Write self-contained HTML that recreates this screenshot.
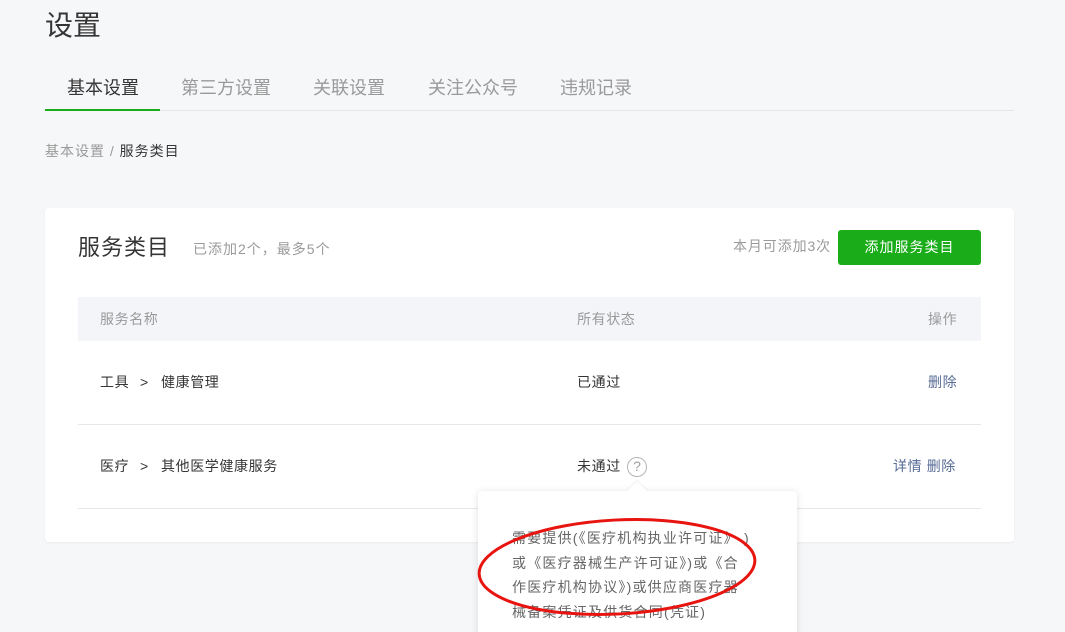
<!DOCTYPE html>
<html><head><meta charset="utf-8"><style>
*{margin:0;padding:0;box-sizing:border-box}
html,body{width:1065px;height:632px;overflow:hidden}
body{background:#f6f7f9;font-family:"Liberation Sans","Noto Sans CJK SC",sans-serif;color:#353535;position:relative}
.abs{position:absolute;white-space:nowrap}
.t{font-size:14px;line-height:18px;letter-spacing:0.6px}
.tab{position:absolute;top:76px;font-size:18px;color:#9a9a9a;line-height:24px}
</style></head><body>
<div class="abs" style="left:45px;top:8px;font-size:28px;line-height:36px;color:#353535">设置</div>
<div class="tab" style="left:67px;color:#353535">基本设置</div>
<div class="tab" style="left:181px">第三方设置</div>
<div class="tab" style="left:313px">关联设置</div>
<div class="tab" style="left:428px">关注公众号</div>
<div class="tab" style="left:560px">违规记录</div>
<div class="abs" style="left:45px;top:110px;width:969px;height:1px;background:#e4e6eb"></div>
<div class="abs" style="left:45px;top:109px;width:115px;height:2px;background:#1aad19"></div>
<div class="abs t" style="left:45px;top:142px;color:#9a9a9a;letter-spacing:1px">基本设置 / <span style="color:#353535">服务类目</span></div>

<div class="abs" style="left:45px;top:208px;width:969px;height:334px;background:#fff;border-radius:4px;box-shadow:0 1px 2px rgba(0,0,0,.05)"></div>
<div class="abs" style="left:78px;top:234px;font-size:22px;line-height:28px;color:#353535;letter-spacing:1px">服务类目</div>
<div class="abs t" style="left:193px;top:240px;color:#9a9a9a;letter-spacing:1px">已添加2个，最多5个</div>
<div class="abs t" style="left:733px;top:237px;color:#9a9a9a;letter-spacing:0.9px">本月可添加3次</div>
<div class="abs" style="left:838px;top:230px;width:143px;height:35px;background:#1aad19;border-radius:3px;color:#fff;font-size:14px;line-height:35px;text-align:center;letter-spacing:1px">添加服务类目</div>

<div class="abs" style="left:78px;top:297px;width:903px;height:44px;background:#f4f5f9"></div>
<div class="abs t" style="left:100px;top:310px;color:#9a9a9a">服务名称</div>
<div class="abs t" style="left:577px;top:310px;color:#9a9a9a">所有状态</div>
<div class="abs t" style="left:928px;top:310px;color:#9a9a9a">操作</div>

<div class="abs t" style="left:100px;top:373px">工具</div>
<div class="abs t" style="left:140px;top:373px">&gt;</div>
<div class="abs t" style="left:161px;top:373px">健康管理</div>
<div class="abs t" style="left:577px;top:373px">已通过</div>
<div class="abs t" style="left:928px;top:373px;color:#576b95">删除</div>
<div class="abs" style="left:78px;top:424px;width:903px;height:1px;background:#e7e7eb"></div>

<div class="abs t" style="left:100px;top:457px">医疗</div>
<div class="abs t" style="left:140px;top:457px">&gt;</div>
<div class="abs t" style="left:161px;top:457px">其他医学健康服务</div>
<div class="abs t" style="left:577px;top:457px">未通过</div>
<div class="abs" style="left:627px;top:457px;width:20px;height:20px;border:1.5px solid #b5b5b5;border-radius:50%;color:#a0a0a0;font-size:14px;line-height:17px;text-align:center">?</div>
<div class="abs t" style="left:893px;top:457px;color:#576b95">详情 删除</div>
<div class="abs" style="left:78px;top:508px;width:903px;height:1px;background:#e7e7eb"></div>

<div class="abs" style="left:478px;top:491px;width:319px;height:150px;background:#fff;border-radius:4px;box-shadow:0 1px 8px rgba(0,0,0,.12)"></div>
<div class="abs" style="left:630px;top:484px;width:14px;height:14px;background:#fff;transform:rotate(45deg);box-shadow:-1px -1px 2px rgba(0,0,0,.06)"></div>
<div class="abs" style="left:512px;top:526px;font-size:14px;line-height:24.5px;color:#666;letter-spacing:1.2px">需要提供(《医疗机构执业许可证》 )<br>或《医疗器械生产许可证》)或《合<br>作医疗机构协议》)或供应商医疗器<br>械备案凭证及供货合同(凭证)</div>
<svg class="abs" style="left:0;top:0" width="1065" height="632"><ellipse cx="617" cy="567" rx="138" ry="47" transform="rotate(-3 617 567)" fill="none" stroke="#e8140f" stroke-width="3"/></svg>
</body></html>
